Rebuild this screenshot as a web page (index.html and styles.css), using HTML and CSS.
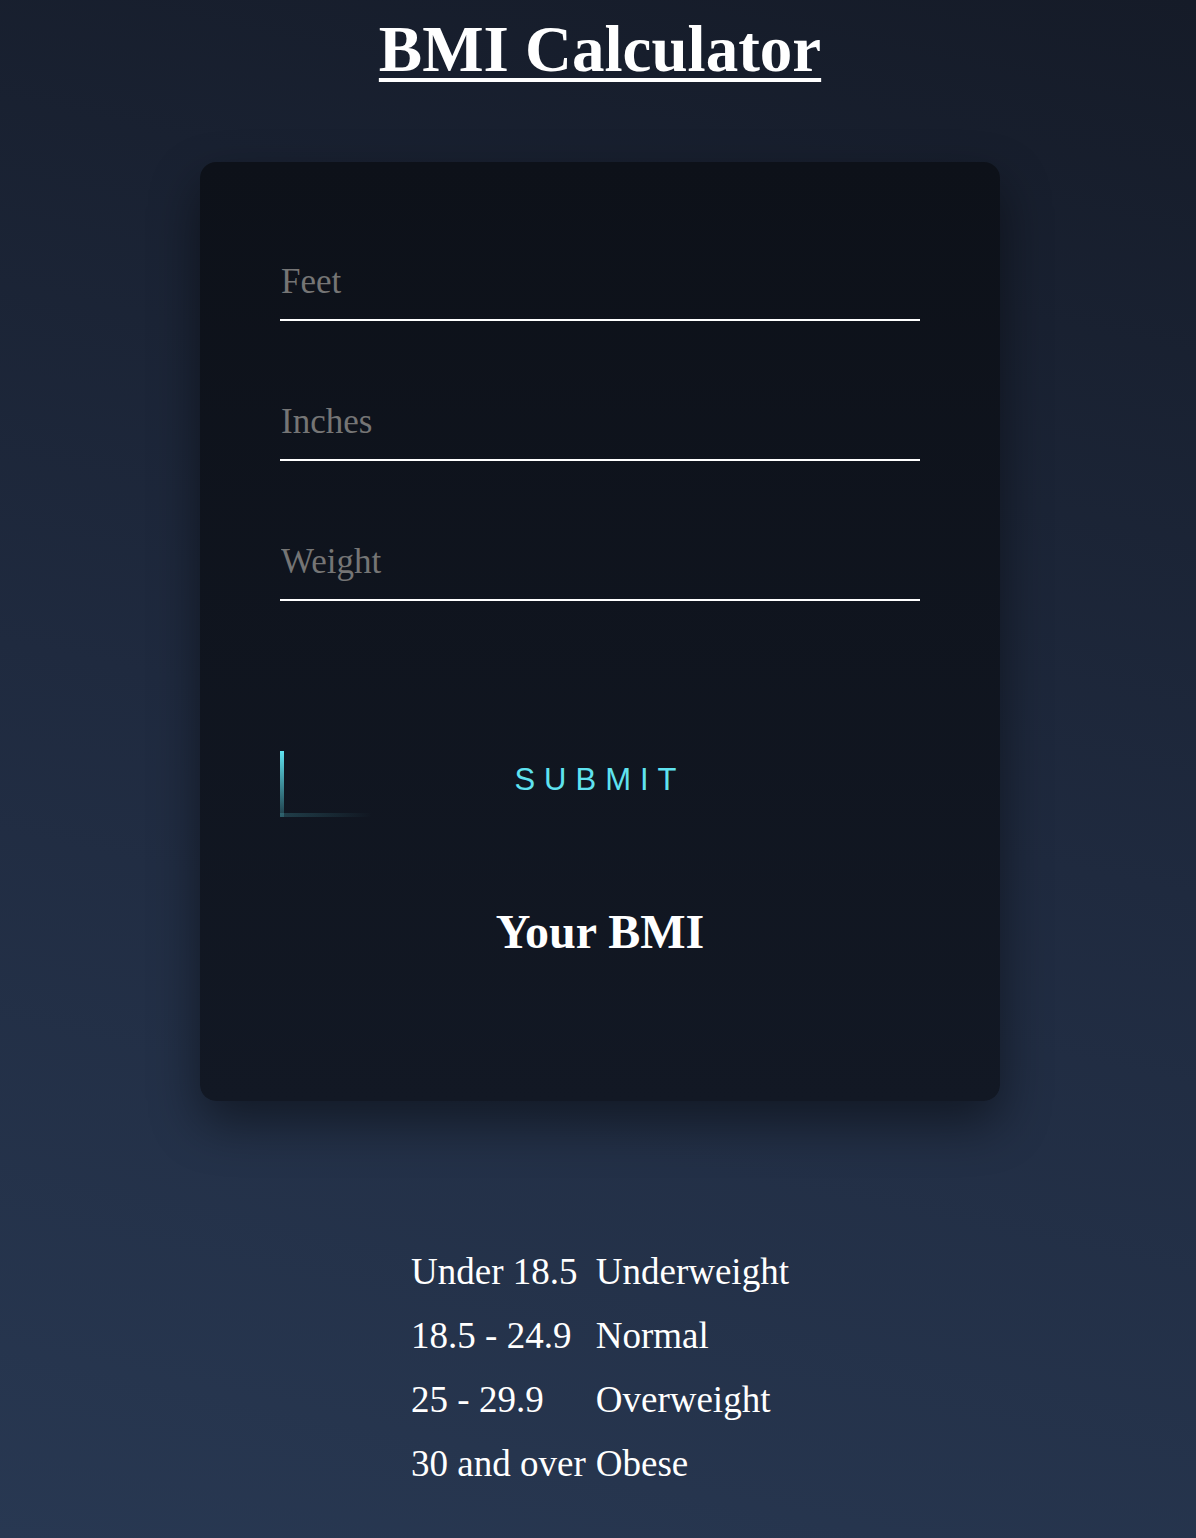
FILE: index.html
```html
<!DOCTYPE html>
<html lang="en">
<head>
<meta charset="utf-8">
<title>BMI Calculator</title>
<link rel="stylesheet" href="styles.css">
</head>
<body>
  <h1 class="title">BMI Calculator</h1>
  <main class="card">
    <form class="form">
      <div class="field"><input class="input" type="text" placeholder="Feet"></div>
      <div class="field"><input class="input" type="text" placeholder="Inches"></div>
      <div class="field"><input class="input" type="text" placeholder="Weight"></div>
      <button class="submit" type="button">
        <span class="edge edge-left"></span>
        <span class="edge edge-bottom"></span>
        SUBMIT
      </button>
    </form>
    <h2 class="result-title">Your BMI</h2>
    <div class="result-value"></div>
  </main>
  <table class="ranges">
    <tr><td>Under 18.5</td><td>Underweight</td></tr>
    <tr><td>18.5 - 24.9</td><td>Normal</td></tr>
    <tr><td>25 - 29.9</td><td>Overweight</td></tr>
    <tr><td>30 and over</td><td>Obese</td></tr>
  </table>
</body>
</html>
```
FILE: styles.css
```css
html {
  min-height: 100%;
  background: linear-gradient(192deg, #151b28 0%, #1f2a3f 50%, #283852 100%);
}
body {
  margin: 0;
  padding-left: 4px;
  min-height: 100vh;
  font-family: "Liberation Serif", "Times New Roman", serif;
  color: #ffffff;
  display: flex;
  flex-direction: column;
  align-items: center;
}
.title {
  margin: 12px 0 0;
  font-size: 65px;
  font-weight: 700;
  line-height: normal;
  text-decoration: underline;
  text-decoration-thickness: 4px;
  text-underline-offset: 7px;
}
.card {
  margin-top: 75px;
  width: 800px;
  box-sizing: border-box;
  padding: 80px 80px 80px;
  border-radius: 16px;
  background: linear-gradient(180deg, #0d1119 0%, #121824 100%);
  box-shadow: 0 22px 50px rgba(0, 0, 0, 0.45);
}
.form {
  display: flex;
  flex-direction: column;
}
.field + .field {
  margin-top: 61px;
}
.input {
  display: block;
  width: 100%;
  box-sizing: border-box;
  height: 79px;
  padding: 20px 0 17px 1px;
  line-height: 40px;
  font-family: "Liberation Serif", "Times New Roman", serif;
  font-size: 35px;
  color: #ffffff;
  background: transparent;
  border: none;
  border-bottom: 2px solid #ffffff;
  outline: none;
}
.input::placeholder {
  color: #757575;
}
.submit {
  position: relative;
  margin-top: 150px;
  height: 66px;
  padding: 9px 0 17px;
  box-sizing: border-box;
  background: transparent;
  border: none;
  font-family: "Liberation Sans", Arial, sans-serif;
  font-size: 31px;
  line-height: 40px;
  letter-spacing: 9px;
  color: #5fe3f0;
  text-align: center;
  cursor: pointer;
}
.edge {
  position: absolute;
  display: block;
}
.edge-left {
  left: 0;
  top: 0;
  width: 4px;
  height: 100%;
  background: linear-gradient(180deg, #5fe3f0 0%, rgba(95, 227, 240, 0.18) 100%);
}
.edge-bottom {
  left: 0;
  bottom: 0;
  width: 92px;
  height: 4px;
  background: linear-gradient(90deg, rgba(95, 227, 240, 0.2) 0%, rgba(95, 227, 240, 0) 100%);
}
.result-title {
  margin: 87px 0 0;
  text-align: center;
  font-size: 48px;
  font-weight: 700;
  line-height: 55px;
}
.result-value {
  height: 62px;
}
.ranges {
  margin-top: 138px;
  border-collapse: collapse;
  font-size: 37px;
}
.ranges td {
  height: 64px;
  padding: 0 5px;
  vertical-align: middle;
  white-space: nowrap;
}
```
